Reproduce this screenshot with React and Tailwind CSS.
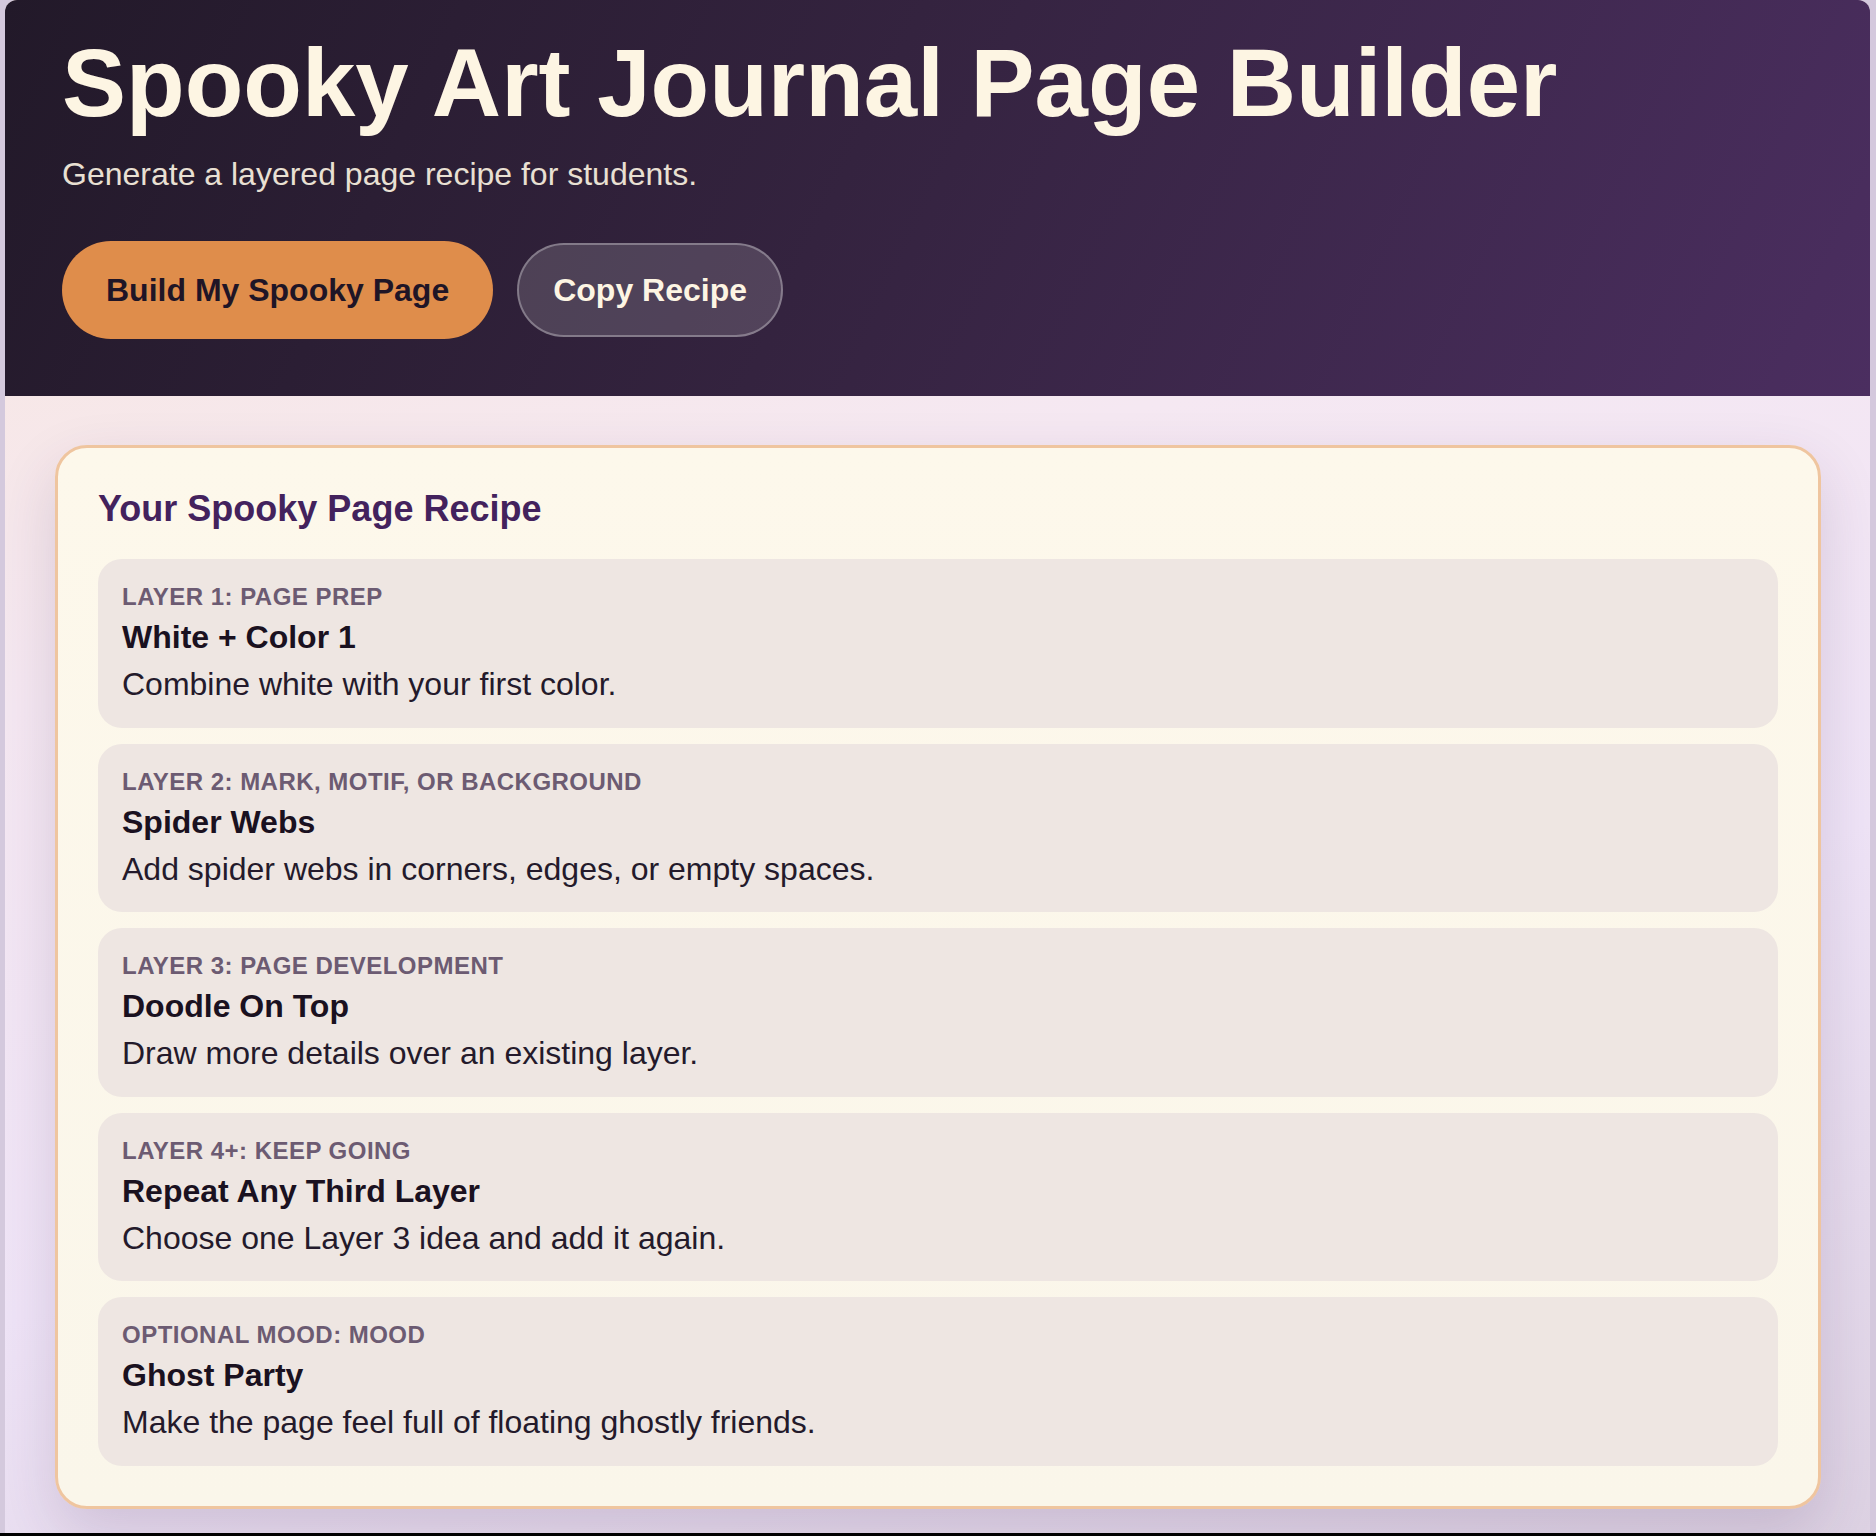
import React from "react";

const layers = [
  { label: "Layer 1: Page Prep", title: "White + Color 1", desc: "Combine white with your first color." },
  { label: "Layer 2: Mark, Motif, or Background", title: "Spider Webs", desc: "Add spider webs in corners, edges, or empty spaces." },
  { label: "Layer 3: Page Development", title: "Doodle On Top", desc: "Draw more details over an existing layer." },
  { label: "Layer 4+: Keep Going", title: "Repeat Any Third Layer", desc: "Choose one Layer 3 idea and add it again." },
  { label: "Optional Mood: Mood", title: "Ghost Party", desc: "Make the page feel full of floating ghostly friends." },
];

export default function App() {
  return (
    <div className="w-[1876px] h-[1536px] bg-[#d4c9dd] flex flex-col overflow-hidden font-['Liberation_Sans',Arial,Helvetica,sans-serif]">
      <div className="flex-1 ml-[5px] mr-[6px] rounded-t-[12px] overflow-hidden flex flex-col bg-[linear-gradient(165deg,#f9e7db_0%,#f5e8f2_35%,#efe4f7_65%,#ddd2e3_100%)]">
        <header className="h-[396px] shrink-0 pl-[57px] pt-[35px] bg-[linear-gradient(115deg,#221929_0%,#34233f_45%,#4b2e60_100%)]">
          <h1 className="text-[96px] leading-none font-bold text-[#fdf5e3]">Spooky Art Journal Page Builder</h1>
          <p className="mt-[19px] text-[32px] leading-[48px] text-[#e9e0d3]">Generate a layered page recipe for students.</p>
          <div className="mt-[43px] flex items-center gap-[24px]">
            <button className="h-[98px] px-[44px] rounded-full bg-[#df8d4b] text-[32px] font-bold text-[#1f1526]">
              Build My Spooky Page
            </button>
            <button className="h-[94px] px-[34px] rounded-full bg-[#ffffff]/15 border-2 border-[#ffffff]/30 text-[32px] font-bold text-[#fdf5e3]">
              Copy Recipe
            </button>
          </div>
        </header>
        <main className="flex-1 pl-[50px] pr-[49px] pt-[49px]">
          <section className="rounded-[32px] border-[3px] border-[#efc59f] bg-[linear-gradient(180deg,#fdf8eb,#faf6ea)] p-[40px] shadow-[0_24px_60px_rgba(70,40,90,0.16)]">
            <h2 className="text-[36px] leading-[41px] font-bold text-[#43225d] mb-[30px]">Your Spooky Page Recipe</h2>
            <div className="flex flex-col gap-[16px]">
              {layers.map((l) => (
                <div key={l.title} className="rounded-[24px] bg-[#eee6e2] px-[24px] pt-[24px] pb-[24.5px]">
                  <div className="text-[24px] leading-[28px] font-bold uppercase tracking-[0.02em] text-[#6c5b72]">{l.label}</div>
                  <div className="mt-[8px] text-[32px] leading-[37px] font-bold text-[#1a1120]">{l.title}</div>
                  <div className="mt-[10px] text-[32px] leading-[37px] text-[#241a2b]">{l.desc}</div>
                </div>
              ))}
            </div>
          </section>
        </main>
      </div>
      <div className="h-[3px] shrink-0 bg-black" />
    </div>
  );
}
